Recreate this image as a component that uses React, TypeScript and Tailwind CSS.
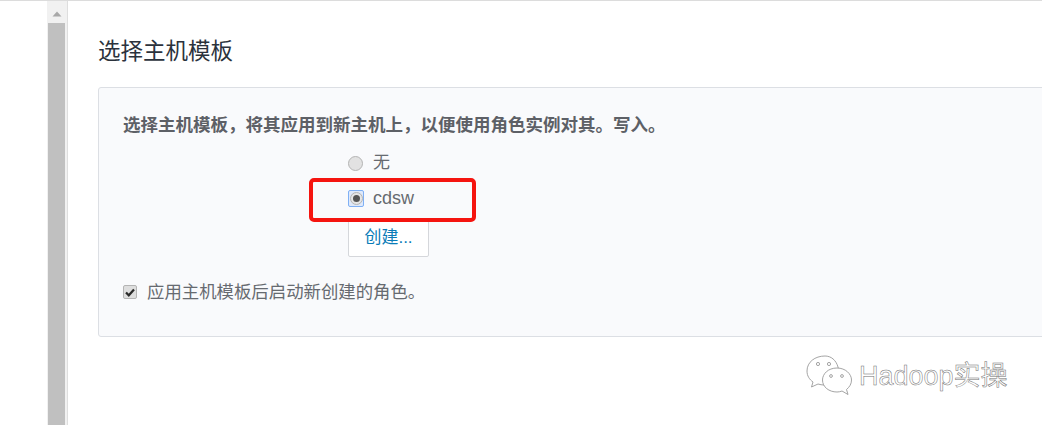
const cjk = '"Liberation Sans", "Noto Sans CJK SC", sans-serif';

const App = () => {
  return (
    <div
      className="relative flex h-[425px] w-[1042px] overflow-hidden border-t border-[#dcdcdc] bg-white"
      style={{ fontFamily: cjk }}
    >
      {/* Left blank + scrollbar */}
      <div className="w-[47px] shrink-0" />
      <div className="flex w-[21px] shrink-0 flex-col items-center border-r border-[#dedede] bg-[#f1f1f1] pr-[2px] pl-[1px]">
        <svg width="10" height="6" viewBox="0 0 10 6" className="mt-[10px]">
          <path d="M5 0.5 L9.5 5.5 L0.5 5.5 Z" fill="#a8a8a8" />
        </svg>
        <div className="mt-[6px] w-full flex-1 bg-[#c0c0c0]" />
      </div>

      {/* Main */}
      <div className="flex-1 pl-[30px]">
        <h2 className="mt-[35px] text-[22.5px] leading-[32px] font-normal text-[#2b323c]">选择主机模板</h2>

        <div className="mt-[19px] h-[250px] w-[960px] rounded-[3px] border border-[#dcdfe4] bg-[#f9fafc] pt-[26px] pl-[24px]">
          <p className="text-[17.5px] leading-[22px] font-bold text-[#5d6066]">
            选择主机模板，将其应用到新主机上，以便使用角色实例对其。写入。
          </p>

          <div className="mt-[12px] ml-[225px] flex flex-col items-start">
            <label className="flex h-[30px] items-center gap-[10px] text-[17px] text-[#666a70]">
              <span className="h-[15px] w-[15px] rounded-full border border-[#b4b4b4] bg-[#e2e2e2]" />
              无
            </label>
            <label className="mt-[5px] flex h-[30px] items-center gap-[9px] text-[18px] text-[#666a70]">
              <span className="flex h-[17px] w-[16px] items-center justify-center rounded-[2px] border border-[#7fb0f5] bg-[#dfe9fa]">
                <span className="flex h-[13px] w-[13px] items-center justify-center rounded-full border border-[#b4b4b4] bg-[#e6e6e6]">
                  <span className="h-[7px] w-[7px] rounded-full bg-[#555]" />
                </span>
              </span>
              cdsw
            </label>
            <button className="mt-[6px] h-[38px] w-[81px] rounded-[2px] border border-[#d5d7db] bg-white text-[17px] text-[#0a7cb8]">
              创建...
            </button>
          </div>

          <label className="mt-[24px] flex items-center gap-[10px] text-[17.4px] leading-[22px] text-[#666a70]">
            <span className="flex h-[14px] w-[14px] items-center justify-center rounded-[2px] border border-[#b4b4b4] bg-[#dedede]">
              <svg width="10" height="9" viewBox="0 0 10 9">
                <path d="M1 4.5 L3.8 7.3 L9 1.5" fill="none" stroke="#2a2a2a" strokeWidth="2.2" />
              </svg>
            </span>
            应用主机模板后启动新创建的角色。
          </label>
        </div>
      </div>

      {/* Red annotation */}
      <div className="absolute top-[177px] left-[309px] h-[44px] w-[167px] rounded-[5px] border-[4px] border-[#f5140f]" />

      {/* Watermark */}
      <div className="absolute top-[353px] left-[806px] flex items-center gap-[6px]">
        <svg width="47" height="44" viewBox="0 0 47 44" fill="white" stroke="#9a9a9a" strokeWidth="0.9">
          <path d="M19 2 C9 2 1 8 1 17 C1 22 3.5 25.5 7 28 L5.5 33 L12 30 C14 30.6 16 31 18 31 L25 31 C33 28 33 15 32 13 C30 6 25 2 19 2 Z" />
          <path d="M31 14 C22 14 16.500 20 16.500 26 C16.500 33 23 38 31 38 C33 38 34.500 37.600 36 37 L42 40.500 L40.500 35.500 C43.500 33 45.500 30 45.500 26 C45.500 20 39.500 14 31 14 Z" />
          <circle cx="12" cy="10" r="1.600" />
          <circle cx="23" cy="10" r="1.600" />
          <circle cx="25" cy="22" r="1.400" />
          <circle cx="36" cy="22" r="1.400" />
        </svg>
        <span
          className="text-[27px] leading-[32px] text-white"
          style={{ WebkitTextStroke: '0.5px #707070' }}
        >
          Hadoop实操
        </span>
      </div>
    </div>
  );
};

export default App;
